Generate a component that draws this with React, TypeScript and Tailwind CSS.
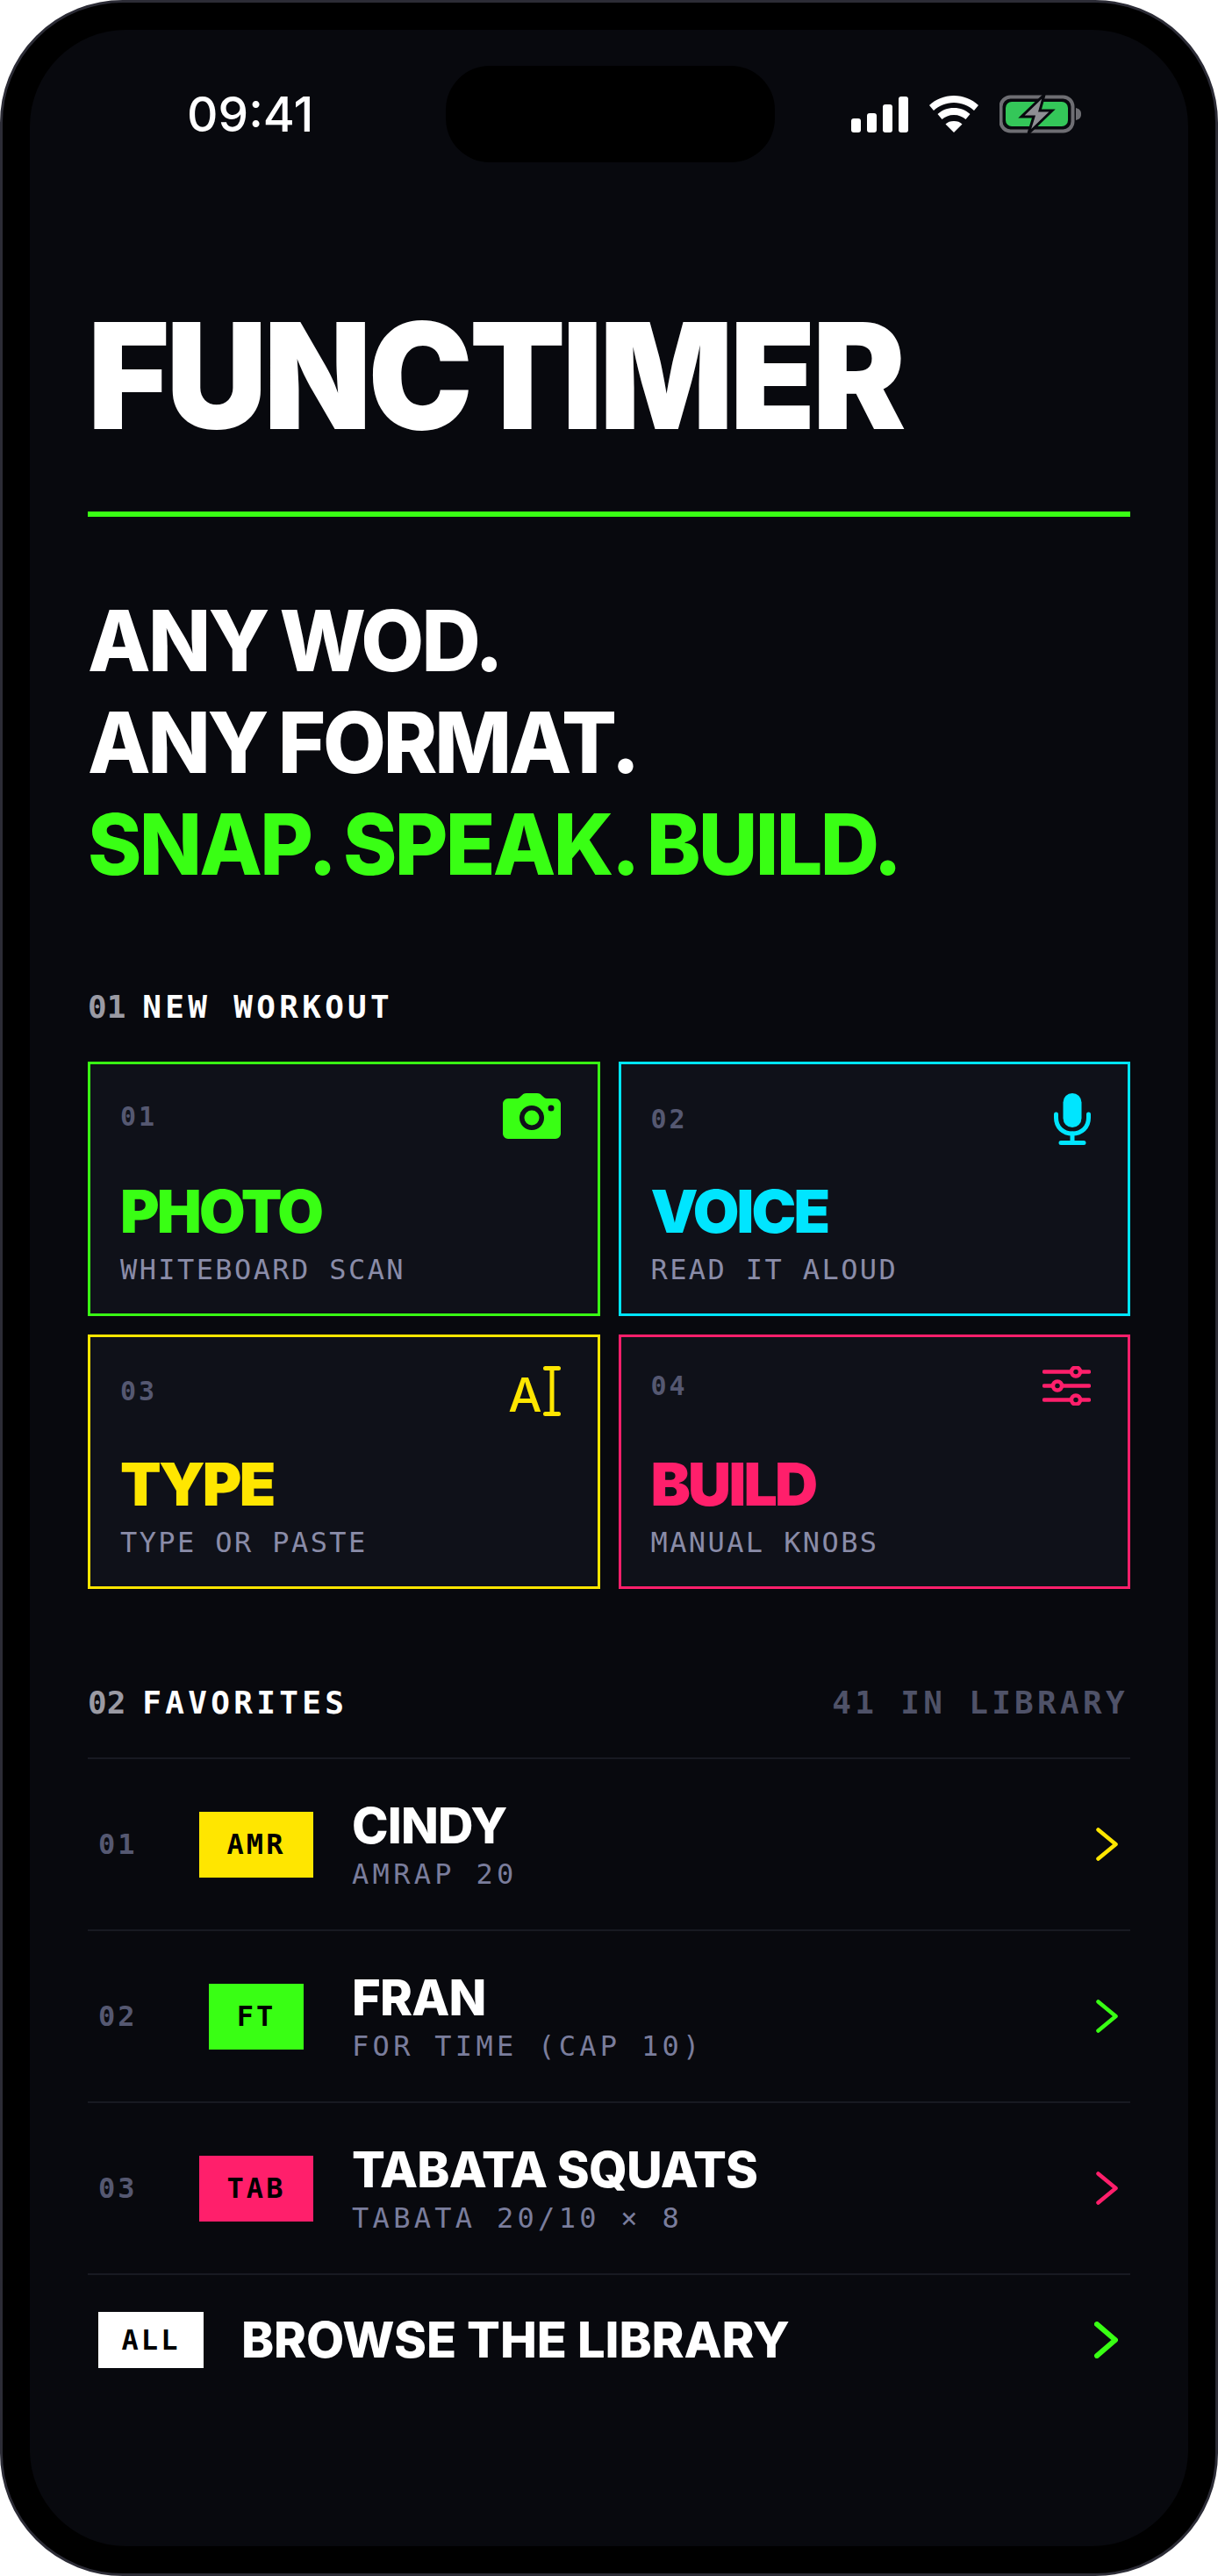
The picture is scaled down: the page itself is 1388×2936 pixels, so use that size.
const SANS = "font-['Inter',sans-serif]";
const MONO = "font-['DejaVu_Sans_Mono','Liberation_Mono',monospace]";

function StatusIcons() {
  return (
    <div className="flex items-center gap-[23px]">
      {/* signal */}
      <div className="flex items-end gap-[7px] h-[41px]">
        <div className="w-[11px] h-[16px] rounded-[3px] bg-white" />
        <div className="w-[11px] h-[22px] rounded-[3px] bg-white" />
        <div className="w-[11px] h-[32px] rounded-[3px] bg-white" />
        <div className="w-[11px] h-[41px] rounded-[3px] bg-white" />
      </div>
      <svg width="58" height="42" viewBox="0 0 58 42" fill="#fff">
        <path d="M29 0C18 0 8.500 4 1 11l5 6C12 11.500 20 8 29 8s17 3.500 23 9l5-6C49.500 4 40 0 29 0z" />
        <path d="M29 14c-7.500 0-13.500 2.500-18.500 7l5 6c3.500-3 8-5 13.500-5s10 2 13.500 5l5-6c-5-4.500-11-7-18.500-7z" />
        <path d="M29 29c-4 0-7 1-9.500 3.500L29 42l9.500-9.500C36 30 33 29 29 29z" />
      </svg>
      <svg width="94" height="46" viewBox="0 0 94 46">
        <rect x="1.500" y="3.500" width="82" height="39" rx="11" fill="none" stroke="#6e6e73" strokeWidth="4" />
        <rect x="7" y="9" width="71" height="28" rx="7" fill="#34c759" />
        <path d="M87 16c4 1 6 3 6 7s-2 6-6 7z" fill="#6e6e73" />
        <path d="M51 1 25 26h14l-6 19 27-26H46z" fill="#8e8e93" stroke="#08090e" strokeWidth="3" />
      </svg>
    </div>
  );
}

function CameraIcon() {
  return (
    <svg width="66" height="52" viewBox="0 0 66 52">
      <path
        fill="#39ff14"
        fillRule="evenodd"
        d="M6 6h10c2 0 3-1 5-3s3-3 6-3h12c3 0 4 1 6 3s3 3 5 3h10c3 0 6 3 6 6v34c0 3-3 6-6 6H6c-3 0-6-3-6-6V12c0-3 3-6 6-6zm27 8a14 14 0 1 0 0 28 14 14 0 0 0 0-28zm0 5.500a8.500 8.500 0 1 1 0 17 8.500 8.500 0 0 1 0-17zM55 13.500a3.500 3.500 0 1 0 0 7 3.500 3.500 0 0 0 0-7z"
      />
    </svg>
  );
}

function MicIcon() {
  return (
    <svg width="42" height="59" viewBox="0 0 42 59">
      <rect x="10.500" y="0" width="21" height="39" rx="10.500" fill="#00e5ff" />
      <path d="M2.500 24v4c0 11 8 18 18.500 18s18.500-7 18.500-18v-4" fill="none" stroke="#00e5ff" strokeWidth="5" strokeLinecap="round" />
      <path d="M21 46v10M8 56.500h26" fill="none" stroke="#00e5ff" strokeWidth="5" strokeLinecap="round" />
    </svg>
  );
}

function TypeIcon() {
  return (
    <div className="flex items-end h-[57px]">
      <span className={`${SANS} text-[54px] leading-[48px] font-medium text-[#ffe600]`}>A</span>
      <svg width="20" height="57" viewBox="0 0 20 57" className="ml-[1px]">
        <path d="M2.500 2.500h15M10 2.500v52M2.500 54.500h15" fill="none" stroke="#ffe600" strokeWidth="5" strokeLinecap="round" />
      </svg>
    </div>
  );
}

function SlidersIcon() {
  return (
    <svg width="55" height="45" viewBox="0 0 55 45" fill="none" stroke="#ff1f6b" strokeWidth="4.500" strokeLinecap="round">
      <path d="M2 6.500h30M44 6.500h9M2 22.500h9M23 22.500h30M2 38.500h30M44 38.500h9" />
      <circle cx="38" cy="6.500" r="5" />
      <circle cx="17" cy="22.500" r="5" />
      <circle cx="38" cy="38.500" r="5" />
    </svg>
  );
}

function Chevron({ color, large }: { color: string; large?: boolean }) {
  if (large) {
    return (
      <svg width="27" height="42" viewBox="0 0 27 42" fill="none" stroke={color} strokeWidth="6" strokeLinecap="round" strokeLinejoin="round">
        <path d="M3 3l21 18L3 39" />
      </svg>
    );
  }
  return (
    <svg width="25" height="38" viewBox="0 0 25 38" fill="none" stroke={color} strokeWidth="4.500" strokeLinecap="round" strokeLinejoin="round">
      <path d="M2.500 2.500 22.500 19l-20 16.500" />
    </svg>
  );
}

const cards = [
  { n: "01", title: "PHOTO", sub: "WHITEBOARD SCAN", border: "border-[#39ff14]", text: "text-[#39ff14]", icon: <CameraIcon /> },
  { n: "02", title: "VOICE", sub: "READ IT ALOUD", border: "border-[#00e5ff]", text: "text-[#00e5ff]", icon: <MicIcon /> },
  { n: "03", title: "TYPE", sub: "TYPE OR PASTE", border: "border-[#ffe600]", text: "text-[#ffe600]", icon: <TypeIcon /> },
  { n: "04", title: "BUILD", sub: "MANUAL KNOBS", border: "border-[#ff1f6b]", text: "text-[#ff1f6b]", icon: <SlidersIcon /> },
];

const favorites = [
  { n: "01", tag: "AMR", bg: "bg-[#ffe600]", arrow: "#ffe600", name: "CINDY", sub: "AMRAP 20" },
  { n: "02", tag: "FT", bg: "bg-[#39ff14]", arrow: "#39ff14", name: "FRAN", sub: "FOR TIME (CAP 10)" },
  { n: "03", tag: "TAB", bg: "bg-[#ff1f6b]", arrow: "#ff1f6b", name: "TABATA SQUATS", sub: "TABATA 20/10 × 8" },
];

export default function App() {
  return (
    <div className="w-[1388px] h-[2936px] bg-white">
      <div className="h-full rounded-[140px] bg-black border-[3px] border-[#2c2c36] p-[31px]">
        <div className="h-full rounded-[110px] bg-[#08090e] px-[66px]">
          {/* Status bar */}
          <div className="flex items-center justify-between pt-[41px]">
            <span className={`${SANS} ml-[113px] w-[143px] text-[55px] leading-[110px] font-medium text-white`}>09:41</span>
            <div className="w-[375px] h-[110px] ml-[64px] rounded-[50px] bg-black" />
            <div className="mr-[55px]">
              <StatusIcons />
            </div>
          </div>

          {/* Title */}
          <h1 className={`${SANS} mt-[159px] origin-left scale-x-[.95] text-[168px] leading-[168px] font-black tracking-[-4.100px] text-white`}>FUNCTIMER</h1>
          <div className="mt-[71px] h-[6px] bg-[#39ff14]" />

          {/* Tagline */}
          <div className={`${SANS} mt-[83px] origin-left scale-x-[.97] text-[96px] leading-[116px] font-extrabold tracking-[-2.800px] [word-spacing:-4px] text-white`}>
            <div>ANY WOD.</div>
            <div className="tracking-[-3.300px]">ANY FORMAT.</div>
            <div className="text-[#39ff14]">SNAP. SPEAK. BUILD.</div>
          </div>

          {/* New workout */}
          <div className={`${MONO} mt-[108px] flex gap-[19px] text-[36px] leading-[40px] font-bold tracking-[4.300px] text-white`}>
            <span className="text-[#9a9aa3] tracking-normal">01</span>
            <span>NEW WORKOUT</span>
          </div>
          <div className="mt-[42px] grid grid-cols-2 gap-[21px]">
            {cards.map((c) => (
              <div key={c.n} className={`h-[290px] border-[3px] ${c.border} bg-[#0f1119] pl-[34px] pr-[42px] pt-[33px] pb-[30px] flex flex-col`}>
                <div className="flex items-center justify-between">
                  <span className={`${MONO} text-[30px] font-bold tracking-[3px] text-[#555871]`}>{c.n}</span>
                  {c.icon}
                </div>
                <div className={`${SANS} mt-auto text-[68px] leading-[76px] font-black tracking-[-2.800px] ${c.text}`}>{c.title}</div>
                <div className={`${MONO} mt-[9px] text-[32px] leading-[40px] tracking-[2.400px] text-[#8a8ca8]`}>{c.sub}</div>
              </div>
            ))}
          </div>

          {/* Favorites */}
          <div className={`${MONO} mt-[110px] flex items-center justify-between text-[36px] leading-[40px] font-bold text-white`}>
            <div className="flex gap-[19px]">
              <span className="text-[#9a9aa3]">02</span>
              <span className="tracking-[4.300px]">FAVORITES</span>
            </div>
            <span className="pr-[2px] tracking-[4.300px] text-[#4f5268]">41 IN LIBRARY</span>
          </div>
          <div className="mt-[42px]">
            {favorites.map((f) => (
              <div key={f.n} className="flex items-center h-[196px] border-t-[2px] border-[#181a22] pl-[12px] pr-[14px]">
                <span className={`${MONO} w-[100px] text-[32px] font-bold tracking-[3px] text-[#555871]`}>{f.n}</span>
                <div className="w-[160px] mr-[29px] flex justify-center">
                  <span className={`${f.bg} ${MONO} px-[32px] h-[75px] flex items-center text-[32px] font-bold tracking-[3px] text-black`}>{f.tag}</span>
                </div>
                <div className="flex-1">
                  <div className={`${SANS} text-[56px] leading-[64px] font-extrabold tracking-[-0.800px] text-white`}>{f.name}</div>
                  <div className={`${MONO} mt-[3px] text-[32px] leading-[40px] tracking-[4.300px] text-[#7a7d9c]`}>{f.sub}</div>
                </div>
                <Chevron color={f.arrow} />
              </div>
            ))}
            <div className="flex items-center h-[150px] border-t-[2px] border-[#181a22] pl-[12px] pr-[14px]">
              <span className={`bg-white ${MONO} w-[120px] h-[64px] flex items-center justify-center text-[32px] font-bold tracking-[3px] text-black`}>ALL</span>
              <span className={`${SANS} ml-[43px] flex-1 text-[56px] font-extrabold tracking-[-0.100px] text-white`}>BROWSE THE LIBRARY</span>
              <Chevron color="#39ff14" large />
            </div>
          </div>
        </div>
      </div>
    </div>
  );
}
